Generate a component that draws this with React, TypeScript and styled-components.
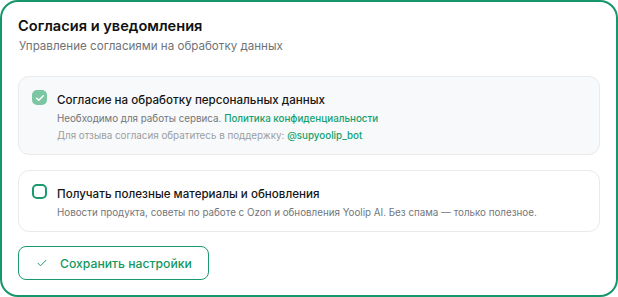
import styled, { createGlobalStyle } from 'styled-components'

const Global = createGlobalStyle`
  html, body { margin: 0; padding: 0; background: #ffffff; }
  body { font-family: Inter, "Noto Sans", sans-serif; }
  * { box-sizing: border-box; }
`

const Card = styled.section`
  width: 618px;
  height: 297px;
  border: 2px solid #16966b;
  border-radius: 18px;
  background: #ffffff;
  padding: 14px 16px 0 16px;
  display: flex;
  flex-direction: column;
`

const Title = styled.h2`
  margin: 0;
  font-size: 14.6px;
  font-weight: 600;
  line-height: 20px;
  color: #111111;
`

const Subtitle = styled.p`
  margin: 2px 0 0 1px;
  font-size: 11.6px;
  line-height: 16px;
  color: #6f7378;
`

const List = styled.div`
  margin-top: 22px;
  display: flex;
  flex-direction: column;
  gap: 15px;
`

const Item = styled.div<{ $muted?: boolean }>`
  display: flex;
  gap: 10px;
  padding: 13px 13px 10px 13px;
  border: 1px solid #e8eaec;
  border-radius: 11px;
  background: ${p => (p.$muted ? '#f8f9fa' : '#ffffff')};
`

const Box = styled.span<{ $checked?: boolean }>`
  flex: none;
  width: 15px;
  height: 15px;
  border-radius: 5px;
  display: flex;
  align-items: center;
  justify-content: center;
  border: 2px solid ${p => (p.$checked ? '#7cc6a3' : '#1a9a6e')};
  background: ${p => (p.$checked ? '#7cc6a3' : '#ffffff')};
`

const Body = styled.div`
  display: flex;
  flex-direction: column;
`

const ItemTitle = styled.div`
  font-size: 11.6px;
  font-weight: 500;
  line-height: 20px;
  color: #151515;
`

const Line = styled.div<{ $faint?: boolean }>`
  font-size: 9.8px;
  line-height: 17px;
  color: ${p => (p.$faint ? '#9a9ea3' : '#72767b')};
`

const Link = styled.a`
  color: #15a06f;
  text-decoration: none;
  font-weight: 500;
`

const Button = styled.button`
  margin-top: 14px;
  align-self: flex-start;
  display: flex;
  align-items: center;
  gap: 12px;
  height: 34px;
  padding: 0 16px 0 17px;
  border: 1.5px solid #1a9a6e;
  border-radius: 8px;
  background: #ffffff;
  color: #13975f;
  font-family: inherit;
  font-size: 12.2px;
  font-weight: 500;
  cursor: pointer;
`

const Check = ({ size, color, width }: { size: number; color: string; width: number }) => (
  <svg width={size} height={size} viewBox="0 0 24 24" fill="none">
    <path d="M4 12.5l5 5L20 6.5" stroke={color} strokeWidth={width} strokeLinecap="round" strokeLinejoin="round" />
  </svg>
)

export default function App() {
  return (
    <>
      <Global />
      <Card>
        <Title>Согласия и уведомления</Title>
        <Subtitle>Управление согласиями на обработку данных</Subtitle>
        <List>
          <Item $muted>
            <Box $checked>
              <Check size={10} color="#ffffff" width={3.5} />
            </Box>
            <Body>
              <ItemTitle>Согласие на обработку персональных данных</ItemTitle>
              <Line>
                Необходимо для работы сервиса. <Link href="#">Политика конфиденциальности</Link>
              </Line>
              <Line $faint>
                Для отзыва согласия обратитесь в поддержку: <Link href="#">@supyoolip_bot</Link>
              </Line>
            </Body>
          </Item>
          <Item>
            <Box />
            <Body>
              <ItemTitle>Получать полезные материалы и обновления</ItemTitle>
              <Line>
                Новости продукта, советы по работе с Ozon и обновления Yoolip AI. Без спама — только полезное.
              </Line>
            </Body>
          </Item>
        </List>
        <Button>
          <Check size={12} color="#1a9a6e" width={2} />
          Сохранить настройки
        </Button>
      </Card>
    </>
  )
}
